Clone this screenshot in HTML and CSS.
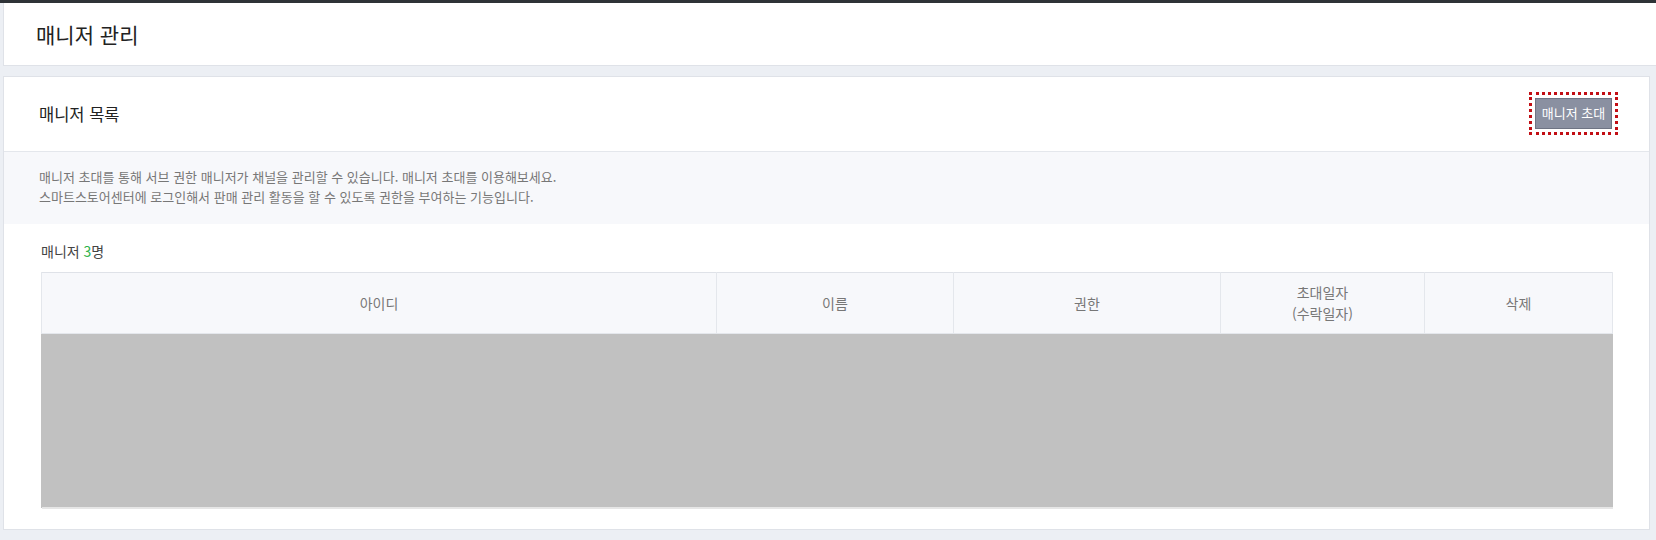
FILE: index.html
```html
<!DOCTYPE html>
<html lang="ko">
<head>
<meta charset="utf-8">
<title>매니저 관리</title>
<link rel="stylesheet" href="styles.css">
</head>
<body>
<div class="topbar"></div>
<header class="page-header">
  <h1 class="page-title">매니저 관리</h1>
</header>
<section class="panel">
  <div class="panel-head">
    <h2 class="panel-title">매니저 목록</h2>
    <button class="btn-invite" type="button">매니저 초대</button>
  </div>
  <div class="panel-info">
    <p>매니저 초대를 통해 서브 권한 매니저가 채널을 관리할 수 있습니다. 매니저 초대를 이용해보세요.</p>
    <p>스마트스토어센터에 로그인해서 판매 관리 활동을 할 수 있도록 권한을 부여하는 기능입니다.</p>
  </div>
  <div class="panel-body">
    <div class="count">매니저 <em>3</em>명</div>
    <table class="grid">
      <colgroup>
        <col class="c-id"><col class="c-name"><col class="c-role"><col class="c-date"><col class="c-del">
      </colgroup>
      <thead>
        <tr>
          <th>아이디</th>
          <th>이름</th>
          <th>권한</th>
          <th>초대일자<br>(수락일자)</th>
          <th>삭제</th>
        </tr>
      </thead>
      <tbody>
        <tr class="redacted"><td></td><td></td><td></td><td></td><td></td></tr>
      </tbody>
    </table>
  </div>
</section>
</body>
</html>
```
FILE: styles.css
```css
* { box-sizing: border-box; }
html, body { margin: 0; padding: 0; }
body {
  background: #eceff4;
  font-family: "Noto Sans CJK KR", "Noto Sans", "Liberation Sans", sans-serif;
  color: #222;
  width: 1656px;
  height: 540px;
  overflow: hidden;
}
.topbar { height: 3px; background: #2e3337; }
.page-header {
  margin-left: 3px;
  height: 63px;
  background: #fff;
  border-left: 1px solid #dfe2e8;
  border-bottom: 1px solid #dfe2e8;
  display: flex;
  align-items: center;
  padding-left: 32px;
}
.page-title {
  margin: 0;
  font-size: 21px;
  font-weight: 400;
  line-height: 28px;
  color: #222;
}
.panel {
  margin: 10px 6px 0 3px;
  height: 454px;
  background: #fff;
  border: 1px solid #dfe2e8;
}
.panel-head {
  height: 75px;
  display: flex;
  align-items: center;
  justify-content: space-between;
  padding: 0 37px 1px 35px;
  border-bottom: 1px solid #e4e7ec;
}
.panel-title {
  margin: 0;
  font-size: 16.5px;
  font-weight: 400;
  line-height: 22px;
  color: #222;
}
.btn-invite {
  height: 31px;
  width: 77px;
  padding: 0;
  background: #8a90a1;
  border: 1px solid #6e7484;
  color: #fff;
  font-family: inherit;
  font-size: 13px;
  line-height: 18px;
  outline: 3px dotted #c20e14;
  outline-offset: 3px;
  margin-bottom: 1px;
}
.panel-info {
  background: #f7f8fb;
  padding: 15px 35px 16px;
  height: 72px;
}
.panel-info p {
  margin: 0;
  font-size: 13px;
  line-height: 20px;
  color: #777;
}
.panel-body { padding: 17px 37px 0 37px; }
.count {
  font-size: 14px;
  line-height: 20px;
  color: #444;
  margin-bottom: 11px;
}
.count em { font-style: normal; color: #2db34a; }
.grid {
  width: 1571px;
  border-collapse: collapse;
  table-layout: fixed;
  border-top: 1px solid #dfe2e8;
}
.c-id { width: 675px; }
.c-name { width: 237px; }
.c-role { width: 267px; }
.c-date { width: 204px; }
.c-del { width: 188px; }
.grid th {
  height: 61px;
  background: #f7f8fb;
  border: 1px solid #e4e7ec;
  border-top: 0;
  font-size: 14px;
  font-weight: 400;
  line-height: 21px;
  color: #777;
  padding: 0;
}
.grid td {
  height: 174px;
  background: #c1c1c1;
  border-bottom: 2px solid #e6e6e6;
  padding: 0;
}
.redacted td:first-child { box-shadow: -1px 0 0 #c1c1c1; }
```
